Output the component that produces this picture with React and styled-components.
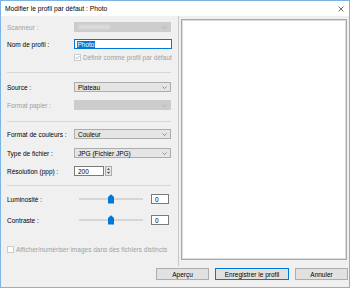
import React from "react";
import styled, { createGlobalStyle } from "styled-components";

const Global = createGlobalStyle`
  html, body { margin: 0; padding: 0; background: #ffffff; }
  body { font-family: "Liberation Sans", Arial, sans-serif; }
`;

const Window = styled.div`
  width: 350px;
  height: 288px;
  box-sizing: border-box;
  border: 1px solid #7db4e6;
  background: #f0f0f0;
  display: flex;
  flex-direction: column;
  font-family: "Liberation Sans", Arial, sans-serif;
  font-size: 6.5px;
  color: #000;
  overflow: hidden;
`;

const TitleBar = styled.div`
  height: 15px;
  flex: none;
  background: #ffffff;
  display: flex;
  align-items: center;
  justify-content: space-between;
  padding: 0 4px 0 4px;
  font-size: 6.7px;
`;

const CloseGlyph = styled.svg`
  width: 6px;
  height: 6px;
  margin-right: 1px;
`;

const Main = styled.div`
  flex: 1;
  display: flex;
  min-height: 0;
`;

const LeftPanel = styled.div`
  width: 177px;
  flex: none;
  box-sizing: border-box;
  padding: 6px 0 0 6px;
  display: flex;
  flex-direction: column;
`;

const Row = styled.div`
  display: flex;
  align-items: center;
  height: ${(p) => p.$h || 10}px;
  margin-top: ${(p) => p.$mt || 0}px;
`;

const Label = styled.div`
  width: 67px;
  flex: none;
  color: ${(p) => (p.$disabled ? "#a0a0a0" : "#000")};
  white-space: nowrap;
`;

const Combo = styled.div`
  width: 97px;
  height: 10px;
  box-sizing: border-box;
  border: 1px solid ${(p) => (p.$disabled ? "#cccccc" : "#acacac")};
  background: ${(p) => (p.$disabled ? "#cccccc" : "#e5e5e5")};
  display: flex;
  align-items: center;
  justify-content: space-between;
  padding: 0 3px 0 3px;
  white-space: nowrap;
`;

const Chevron = styled.svg`
  width: 5px;
  height: 3px;
  flex: none;
`;

const Blurred = styled.span`
  display: block;
  width: 32px;
  height: 4px;
  background: #dcdcdc;
  filter: blur(1px);
`;

const TextBox = styled.div`
  width: ${(p) => p.$w || 98}px;
  height: 10px;
  box-sizing: border-box;
  border: 1px solid ${(p) => (p.$focus ? "#0078d7" : "#7a7a7a")};
  background: #ffffff;
  display: flex;
  align-items: center;
  padding-left: ${(p) => p.$pl ?? 3}px;
  white-space: nowrap;
`;

const Selected = styled.span`
  background: #0078d7;
  color: #ffffff;
  padding: 0 0.5px;
  line-height: 7px;
`;

const Spinner = styled.div`
  width: 7px;
  height: 10px;
  margin-left: 1px;
  box-sizing: border-box;
  border: 1px solid #acacac;
  background: #e8e8e8;
  display: flex;
  flex-direction: column;
`;

const SpinHalf = styled.div`
  flex: 1;
  display: flex;
  align-items: center;
  justify-content: center;
  border-top: ${(p) => (p.$bottom ? "1px solid #cfcfcf" : "none")};
`;

const CheckRow = styled.div`
  display: flex;
  align-items: center;
  height: 8px;
  margin-top: ${(p) => p.$mt || 0}px;
  margin-left: ${(p) => p.$ml || 0}px;
  color: #a0a0a0;
  white-space: nowrap;
`;

const CheckBox = styled.div`
  width: 7px;
  height: 7px;
  box-sizing: border-box;
  border: 1px solid #cccccc;
  background: #ffffff;
  margin-right: 2px;
  display: flex;
  align-items: center;
  justify-content: center;
`;

const Separator = styled.div`
  height: 1px;
  width: 164px;
  margin-top: ${(p) => p.$mt || 0}px;
  background: #d7d7d7;
`;

const SliderWrap = styled.div`
  width: 72px;
  height: 10px;
  margin-left: 5px;
  position: relative;
  display: flex;
  align-items: center;
`;

const Track = styled.div`
  width: 64px;
  height: 2px;
  background: #e7e7e7;
  border: 1px solid #d6d6d6;
  box-sizing: border-box;
`;

const Thumb = styled.svg`
  position: absolute;
  left: ${(p) => p.$x}px;
  top: 0;
  width: 6px;
  height: 10px;
`;

const RightPanel = styled.div`
  flex: 1;
  display: flex;
  box-sizing: border-box;
  border-left: 1px solid #c8c8c8;
  padding: 3px 2px 6px 2px;
`;

const Preview = styled.div`
  flex: 1;
  background: #ffffff;
  border: 1px solid #a9a9a9;
  box-shadow: inset 0 0 0 1px #dcdcdc;
`;

const ButtonBar = styled.div`
  height: 21px;
  flex: none;
  box-sizing: border-box;
  display: flex;
  justify-content: flex-end;
  align-items: flex-start;
  padding: 2px 1px 0 0;
  gap: 6px;
`;

const Button = styled.div`
  width: ${(p) => p.$w}px;
  height: 12px;
  box-sizing: border-box;
  border: 1px solid ${(p) => (p.$default ? "#0078d7" : "#adadad")};
  background: #e1e1e1;
  display: flex;
  align-items: center;
  justify-content: center;
  white-space: nowrap;
`;

const ChevronIcon = ({ disabled }) => (
  <Chevron viewBox="0 0 5 3">
    <path d="M0.5 0.5 L2.5 2.5 L4.5 0.5" fill="none" stroke={disabled ? "#a8a8a8" : "#707070"} strokeWidth="0.7" />
  </Chevron>
);

const Check = () => (
  <svg width="5" height="5" viewBox="0 0 5 5">
    <path d="M0.6 2.6 L1.9 3.9 L4.4 0.9" fill="none" stroke="#a0a0a0" strokeWidth="0.8" />
  </svg>
);

const Arrow = ({ down }) => (
  <svg width="3" height="2" viewBox="0 0 3 2">
    <path d={down ? "M0 0 L3 0 L1.5 2 Z" : "M0 2 L3 2 L1.5 0 Z"} fill="#505050" />
  </svg>
);

const Slider = ({ pos }) => (
  <SliderWrap>
    <Track />
    <Thumb $x={pos} viewBox="0 0 6 10">
      <path d="M0 3 L3 0.3 L6 3 L6 9.5 L0 9.5 Z" fill="#0078d7" />
    </Thumb>
  </SliderWrap>
);

export default function App() {
  return (
    <>
      <Global />
      <Window>
        <TitleBar>
          <span>Modifier le profil par défaut : Photo</span>
          <CloseGlyph viewBox="0 0 6 6">
            <path d="M0.5 0.5 L5.5 5.5 M5.5 0.5 L0.5 5.5" stroke="#333" strokeWidth="0.7" />
          </CloseGlyph>
        </TitleBar>
        <Main>
          <LeftPanel>
            <Row>
              <Label $disabled>Scanneur :</Label>
              <Combo $disabled>
                <Blurred />
                <ChevronIcon disabled />
              </Combo>
            </Row>
            <Row $mt={7}>
              <Label>Nom de profil :</Label>
              <TextBox $focus $pl={2}>
                <Selected>Photo</Selected>
              </TextBox>
            </Row>
            <CheckRow $mt={4} $ml={67}>
              <CheckBox>
                <Check />
              </CheckBox>
              Définir comme profil par défaut
            </CheckRow>
            <Separator $mt={11} />
            <Row $mt={9}>
              <Label>Source :</Label>
              <Combo>
                Plateau
                <ChevronIcon />
              </Combo>
            </Row>
            <Row $mt={8}>
              <Label $disabled>Format papier :</Label>
              <Combo $disabled>
                <span />
                <ChevronIcon disabled />
              </Combo>
            </Row>
            <Separator $mt={11} />
            <Row $mt={7}>
              <Label>Format de couleurs :</Label>
              <Combo>
                Couleur
                <ChevronIcon />
              </Combo>
            </Row>
            <Row $mt={9}>
              <Label>Type de fichier :</Label>
              <Combo>
                JPG (Fichier JPG)
                <ChevronIcon />
              </Combo>
            </Row>
            <Row $mt={8}>
              <Label>Résolution (ppp) :</Label>
              <TextBox $w={30}>200</TextBox>
              <Spinner>
                <SpinHalf>
                  <Arrow />
                </SpinHalf>
                <SpinHalf $bottom>
                  <Arrow down />
                </SpinHalf>
              </Spinner>
            </Row>
            <Separator $mt={9} />
            <Row $mt={8}>
              <Label>Luminosité :</Label>
              <Slider pos={29} />
              <TextBox $w={18}>0</TextBox>
            </Row>
            <Row $mt={11}>
              <Label>Contraste :</Label>
              <Slider pos={29} />
              <TextBox $w={18}>0</TextBox>
            </Row>
            <CheckRow $mt={20}>
              <CheckBox />
              Afficher/numériser images dans des fichiers distincts
            </CheckRow>
          </LeftPanel>
          <RightPanel>
            <Preview />
          </RightPanel>
        </Main>
        <ButtonBar>
          <Button $w={53}>Aperçu</Button>
          <Button $w={74} $default>
            Enregistrer le profil
          </Button>
          <Button $w={53}>Annuler</Button>
        </ButtonBar>
      </Window>
    </>
  );
}
